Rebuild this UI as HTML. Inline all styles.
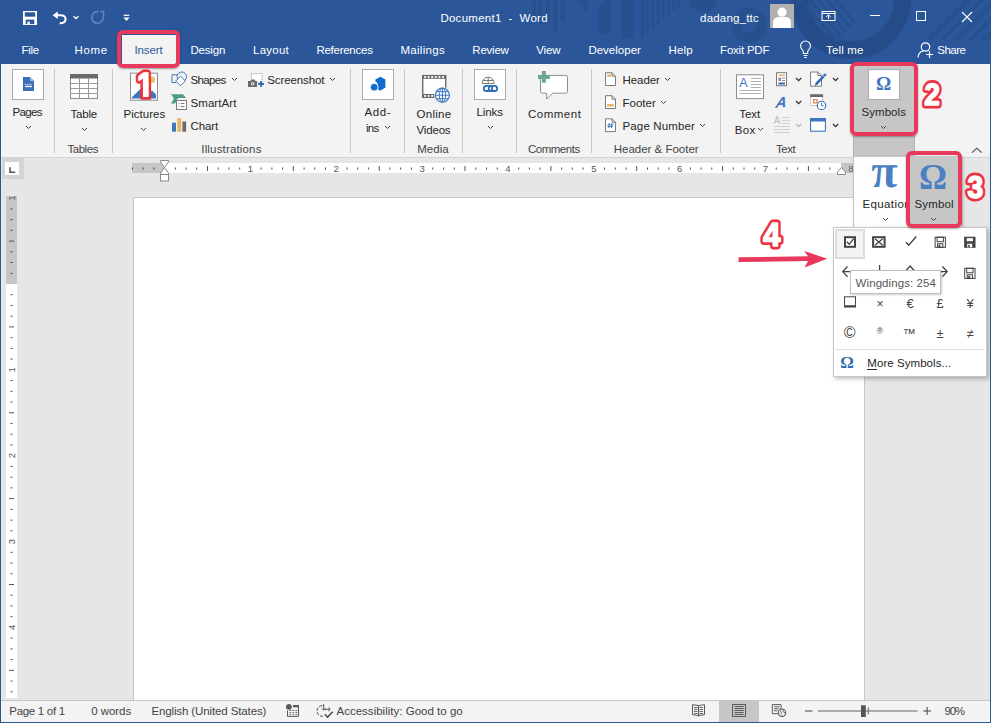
<!DOCTYPE html>
<html><head><meta charset="utf-8"><title>Document1 - Word</title>
<style>
html,body{margin:0;padding:0}
body{width:991px;height:723px;overflow:hidden;position:relative;background:#e6e6e6;font-family:"Liberation Sans",sans-serif;}
.t{position:absolute;white-space:pre;line-height:16px;font-family:"Liberation Sans",sans-serif;}
.a{position:absolute}
svg{position:absolute;overflow:visible}

.tb{position:absolute;left:0;top:0;width:991px;height:64px;background:#2b579a}
.rb{position:absolute;left:0;top:64px;width:991px;height:93px;background:#f3f3f3;border-bottom:1px solid #d4d4d4}
.sep{position:absolute;width:1px;background:#c8c8c8;top:69px;height:84px}
.ibox{position:absolute;background:#fff;border:1px solid #ababab;box-sizing:border-box}
.red{position:absolute;border:4px solid #e8395d;border-radius:6px;box-sizing:border-box;box-shadow:0 1px 2px rgba(0,0,0,.35)}

</style></head><body>
<div class="tb"></div>
<svg style="left:0;top:0" width="991" height="64" viewBox="0 0 991 64"><defs><clipPath id="tbc"><rect x="0" y="0" width="991" height="64"/></clipPath></defs><g clip-path="url(#tbc)" fill="#27508f"><rect x="532" y="0" width="3.8" height="20"/><rect x="538.5" y="0" width="3.8" height="24"/><rect x="546" y="0" width="3.8" height="22"/><rect x="553" y="0" width="4.5" height="33"/><rect x="560.5" y="0" width="4.5" height="20"/><path d="M578 0 H588 V14 Z"/><path d="M598 8 L604 0 H611 V34 H598 Z"/><rect x="621" y="0" width="13" height="38"/><rect x="641.0" y="0" width="3" height="38.0"/><rect x="646.2" y="0" width="3" height="33.4"/><rect x="651.4" y="0" width="3" height="28.8"/><rect x="656.6" y="0" width="3" height="24.2"/><rect x="661.8" y="0" width="3" height="19.6"/><rect x="667.0" y="0" width="3" height="15.0"/><rect x="672.2" y="0" width="3" height="10.4"/><rect x="677.4" y="0" width="3" height="5.8"/><path d="M689 0 A14 12 0 0 0 717 0 Z"/><circle cx="749.4" cy="25.2" r="12.4" fill="none" stroke="#27508f" stroke-width="10.6"/><circle cx="851" cy="-1.5" r="51.5" fill="none" stroke="#254c88" stroke-width="17"/><path d="M798 0 L802.5 0 L840 42 L835.5 42 Z"/><path d="M807 0 L811.5 0 L844 37 L839.5 37 Z"/><path d="M816 0 L820.5 0 L848 32 L843.5 32 Z"/><path d="M825 0 L829.5 0 L852 27 L847.5 27 Z"/><path d="M834 0 L838.5 0 L856 22 L851.5 22 Z"/><path d="M965 0 L971 0 L931 40 L925 40 Z"/><path d="M979 0 L985 0 L945 40 L939 40 Z"/><path d="M993 0 L999 0 L959 40 L953 40 Z"/><path d="M1007 0 L1013 0 L973 40 L967 40 Z"/><path d="M1021 0 L1027 0 L987 40 L981 40 Z"/></g></svg>
<span class="t" style="left:440.4px;top:10px;font-size:11.5px;letter-spacing:0.265px;color:#fff;">Document1  -  Word</span>
<span class="t" style="left:700.1px;top:10px;font-size:11.5px;letter-spacing:0.187px;color:#fff;">dadang_ttc</span>
<span class="t" style="left:21.4px;top:42px;font-size:11.5px;letter-spacing:-0.277px;color:#fff;">File</span>
<span class="t" style="left:74.4px;top:42px;font-size:11.5px;letter-spacing:0.707px;color:#fff;">Home</span>
<span class="t" style="left:190.5px;top:42px;font-size:11.5px;letter-spacing:-0.200px;color:#fff;">Design</span>
<span class="t" style="left:253.1px;top:42px;font-size:11.5px;letter-spacing:0.214px;color:#fff;">Layout</span>
<span class="t" style="left:316.4px;top:42px;font-size:11.5px;letter-spacing:-0.257px;color:#fff;">References</span>
<span class="t" style="left:400.4px;top:42px;font-size:11.5px;letter-spacing:0.317px;color:#fff;">Mailings</span>
<span class="t" style="left:472.3px;top:42px;font-size:11.5px;letter-spacing:-0.221px;color:#fff;">Review</span>
<span class="t" style="left:536.2px;top:42px;font-size:11.5px;letter-spacing:-0.106px;color:#fff;">View</span>
<span class="t" style="left:588.4px;top:42px;font-size:11.5px;letter-spacing:0.010px;color:#fff;">Developer</span>
<span class="t" style="left:668.4px;top:42px;font-size:11.5px;letter-spacing:0.183px;color:#fff;">Help</span>
<span class="t" style="left:720.1px;top:42px;font-size:11.5px;letter-spacing:-0.215px;color:#fff;">Foxit PDF</span>
<span class="t" style="left:826.0px;top:42px;font-size:11.5px;letter-spacing:0.162px;color:#fff;">Tell me</span>
<span class="t" style="left:937.3px;top:42px;font-size:11.5px;letter-spacing:-0.497px;color:#fff;">Share</span>
<div class="a" style="left:122px;top:35px;width:54px;height:29px;background:#f3f3f3"></div>
<span class="t" style="left:134.5px;top:42px;font-size:11.5px;letter-spacing:-0.113px;color:#2b579a;">Insert</span>
<div class="rb"></div>
<div class="sep" style="left:54px"></div>
<div class="sep" style="left:112px"></div>
<div class="sep" style="left:350px"></div>
<div class="sep" style="left:404px"></div>
<div class="sep" style="left:462px"></div>
<div class="sep" style="left:516px"></div>
<div class="sep" style="left:591px"></div>
<div class="sep" style="left:720px"></div>
<div class="a" style="left:853px;top:64px;width:62px;height:92px;background:#c6c6c6;border-left:1px solid #b4b4b4;border-right:1px solid #b4b4b4;box-sizing:border-box"></div>
<span class="t" style="left:12.6px;top:104px;font-size:11.5px;letter-spacing:-0.702px;color:#262626;">Pages</span>
<span class="t" style="left:70.6px;top:106px;font-size:11.5px;letter-spacing:-0.249px;color:#262626;">Table</span>
<span class="t" style="left:123.6px;top:106px;font-size:11.5px;letter-spacing:0.008px;color:#262626;">Pictures</span>
<span class="t" style="left:364.4px;top:104px;font-size:11.5px;letter-spacing:0.636px;color:#262626;">Add-</span>
<span class="t" style="left:365.9px;top:120px;font-size:11.5px;letter-spacing:-0.651px;color:#262626;">ins</span>
<span class="t" style="left:416.6px;top:106px;font-size:11.5px;letter-spacing:0.251px;color:#262626;">Online</span>
<span class="t" style="left:416.6px;top:122px;font-size:11.5px;letter-spacing:-0.191px;color:#262626;">Videos</span>
<span class="t" style="left:476.5px;top:104px;font-size:11.5px;letter-spacing:-0.112px;color:#262626;">Links</span>
<span class="t" style="left:527.9px;top:106px;font-size:11.5px;letter-spacing:0.525px;color:#262626;">Comment</span>
<span class="t" style="left:739.3px;top:106px;font-size:11.5px;letter-spacing:-0.097px;color:#262626;">Text</span>
<span class="t" style="left:734.7px;top:122px;font-size:11.5px;letter-spacing:0.342px;color:#262626;">Box</span>
<span class="t" style="left:861.4px;top:104px;font-size:11.5px;letter-spacing:0.084px;color:#262626;">Symbols</span>
<span class="t" style="left:190.5px;top:72px;font-size:11.5px;letter-spacing:-0.641px;color:#262626;">Shapes</span>
<span class="t" style="left:190.5px;top:95px;font-size:11.5px;letter-spacing:0.076px;color:#262626;">SmartArt</span>
<span class="t" style="left:190.5px;top:118px;font-size:11.5px;letter-spacing:-0.106px;color:#262626;">Chart</span>
<span class="t" style="left:267.2px;top:72px;font-size:11.5px;letter-spacing:-0.098px;color:#262626;">Screenshot</span>
<span class="t" style="left:622.5px;top:72px;font-size:11.5px;letter-spacing:-0.064px;color:#262626;">Header</span>
<span class="t" style="left:622.5px;top:95px;font-size:11.5px;letter-spacing:0.012px;color:#262626;">Footer</span>
<span class="t" style="left:622.5px;top:118px;font-size:11.5px;letter-spacing:0.144px;color:#262626;">Page Number</span>
<span class="t" style="left:67.4px;top:141px;font-size:11.5px;letter-spacing:-0.449px;color:#444;">Tables</span>
<span class="t" style="left:201.3px;top:141px;font-size:11.5px;letter-spacing:0.161px;color:#444;">Illustrations</span>
<span class="t" style="left:417.3px;top:141px;font-size:11.5px;letter-spacing:-0.006px;color:#444;">Media</span>
<span class="t" style="left:527.9px;top:141px;font-size:11.5px;letter-spacing:-0.471px;color:#444;">Comments</span>
<span class="t" style="left:613.7px;top:141px;font-size:11.5px;letter-spacing:-0.002px;color:#444;">Header &amp; Footer</span>
<span class="t" style="left:776.0px;top:141px;font-size:11.5px;letter-spacing:-0.464px;color:#444;">Text</span>
<svg style="left:26px;top:126px" width="5" height="3.5"><path d="M0 0 L2.5 2.5 L5 0" fill="none" stroke="#444" stroke-width="1"/></svg>
<svg style="left:81.5px;top:128px" width="5" height="3.5"><path d="M0 0 L2.5 2.5 L5 0" fill="none" stroke="#444" stroke-width="1"/></svg>
<svg style="left:141.3px;top:128px" width="5" height="3.5"><path d="M0 0 L2.5 2.5 L5 0" fill="none" stroke="#444" stroke-width="1"/></svg>
<svg style="left:231.6px;top:78px" width="5" height="3.5"><path d="M0 0 L2.5 2.5 L5 0" fill="none" stroke="#444" stroke-width="1"/></svg>
<svg style="left:329.6px;top:78px" width="5" height="3.5"><path d="M0 0 L2.5 2.5 L5 0" fill="none" stroke="#444" stroke-width="1"/></svg>
<svg style="left:384.5px;top:126px" width="5" height="3.5"><path d="M0 0 L2.5 2.5 L5 0" fill="none" stroke="#444" stroke-width="1"/></svg>
<svg style="left:487.6px;top:126px" width="5" height="3.5"><path d="M0 0 L2.5 2.5 L5 0" fill="none" stroke="#444" stroke-width="1"/></svg>
<svg style="left:664.9px;top:78px" width="5" height="3.5"><path d="M0 0 L2.5 2.5 L5 0" fill="none" stroke="#444" stroke-width="1"/></svg>
<svg style="left:660.6px;top:101px" width="5" height="3.5"><path d="M0 0 L2.5 2.5 L5 0" fill="none" stroke="#444" stroke-width="1"/></svg>
<svg style="left:700px;top:124px" width="5" height="3.5"><path d="M0 0 L2.5 2.5 L5 0" fill="none" stroke="#444" stroke-width="1"/></svg>
<svg style="left:758.3px;top:128px" width="5" height="3.5"><path d="M0 0 L2.5 2.5 L5 0" fill="none" stroke="#444" stroke-width="1"/></svg>
<svg style="left:881.3px;top:126px" width="5" height="3.5"><path d="M0 0 L2.5 2.5 L5 0" fill="none" stroke="#444" stroke-width="1"/></svg>
<svg style="left:795.5px;top:78px" width="5.2" height="3.6"><path d="M0 0 L2.6 2.6 L5.2 0" fill="none" stroke="#333" stroke-width="1.3"/></svg>
<svg style="left:795.5px;top:101px" width="5.2" height="3.6"><path d="M0 0 L2.6 2.6 L5.2 0" fill="none" stroke="#333" stroke-width="1.3"/></svg>
<svg style="left:833.4px;top:78px" width="5.2" height="3.6"><path d="M0 0 L2.6 2.6 L5.2 0" fill="none" stroke="#333" stroke-width="1.3"/></svg>
<svg style="left:833.4px;top:124px" width="5.2" height="3.6"><path d="M0 0 L2.6 2.6 L5.2 0" fill="none" stroke="#333" stroke-width="1.3"/></svg>
<svg style="left:795.5px;top:124px" width="5.2" height="3.6"><path d="M0 0 L2.6 2.6 L5.2 0" fill="none" stroke="#b8b8b8" stroke-width="1.3"/></svg>
<div class="ibox" style="left:12px;top:69px;width:32px;height:31px"></div>
<div class="ibox" style="left:362px;top:69px;width:32px;height:31px"></div>
<div class="ibox" style="left:474px;top:69px;width:32px;height:31px"></div>
<div class="ibox" style="left:868px;top:69px;width:32px;height:31px"></div>
<svg style="left:0;top:0" width="991" height="64"><rect x="23" y="11" width="14" height="14" fill="#fff"/><rect x="24.800" y="12.300" width="10.400" height="4.400" fill="#2b579a"/><rect x="25.700" y="19.600" width="8.600" height="4.500" fill="#2b579a"/><rect x="27.500" y="21.600" width="2.300" height="2.500" fill="#fff"/><path d="M57.800 11.500 L52.600 15.200 L57.800 19 Z" fill="#fff"/><path d="M56 15.200 H60.500 C67 15.200 67.500 22.500 60.500 23.300" fill="none" stroke="#fff" stroke-width="2" stroke-linecap="round"/><path d="M73.500 16.200 L76 18.500 L78.500 16.200" fill="none" stroke="#fff" stroke-width="1.300"/><path d="M98.500 11.700 A5.800 5.800 0 1 0 103.200 16.300" fill="none" stroke="#6584ba" stroke-width="1.600"/><path d="M100 11.600 H103.500 V16.600" fill="none" stroke="#6584ba" stroke-width="1.500"/><rect x="123.7" y="14.7" width="5.6" height="1.2" fill="#fff"/><path d="M123.4 17.6 H129.6 L126.5 21 Z" fill="#fff"/><rect x="770" y="4" width="24" height="24" fill="#b1b1b1"/><circle cx="782" cy="12.2" r="4.6" fill="#fff"/><path d="M773 28 V22.5 Q773 17.5 778.5 17 H785.5 Q791 17.5 791 22.5 V28 Z" fill="#fff"/><rect x="822" y="11.5" width="13" height="9" fill="none" stroke="#fff" stroke-width="1"/><path d="M822 13.5 H835" stroke="#fff" stroke-width="1"/><path d="M828.5 19 V15 M826.3 17 L828.5 14.8 L830.7 17" fill="none" stroke="#fff" stroke-width="1"/><rect x="870" y="15" width="10" height="1" fill="#fff"/><rect x="916.5" y="11.5" width="9" height="9" fill="none" stroke="#fff" stroke-width="1"/><path d="M962 12 L972 22 M972 12 L962 22" stroke="#fff" stroke-width="1.1" fill="none"/><path d="M803.3 53.5 V52 Q803.3 50.5 802 49.3 A4.9 4.9 0 1 1 809 49.3 Q807.7 50.5 807.7 52 V53.5 Z M803.6 55.5 H807.4 M804.3 57.5 H806.7" fill="none" stroke="#fff" stroke-width="1.1"/><circle cx="925.5" cy="47" r="4.2" fill="none" stroke="#fff" stroke-width="1.2"/><path d="M918 57.5 Q918.5 52 923 51" fill="none" stroke="#fff" stroke-width="1.2"/><path d="M926 54.5 H933 M929.5 51 V58" stroke="#fff" stroke-width="1.2"/></svg>
<svg style="left:0;top:0" width="991" height="160"><path d="M23 77 H30 L34 81 V91 H23 Z" fill="#3f6fb8"/><path d="M30 77 V81 H34 Z" fill="#9db8dd"/><path d="M25 84.5 H32" stroke="#fff" stroke-width="1" stroke-dasharray="1 0.8"/><path d="M25 86.5 H32" stroke="#fff" stroke-width="1.2"/><rect x="70.5" y="74.5" width="27" height="24" fill="#fff" stroke="#8c8c8c"/><rect x="70" y="74" width="28" height="4.5" fill="#6a6a6a"/><path d="M79.5 78 V98.5" stroke="#9a9a9a"/><path d="M88.5 78 V98.5" stroke="#9a9a9a"/><path d="M70.5 83.5 H97.5" stroke="#9a9a9a"/><path d="M70.5 88.5 H97.5" stroke="#9a9a9a"/><path d="M70.5 93.5 H97.5" stroke="#9a9a9a"/><rect x="130.5" y="73.200" width="27" height="27" fill="#fff" stroke="#8c8c8c"/><circle cx="152" cy="79.7" r="3.2" fill="#f0c465"/><path d="M132 98.500 V97 L143 86.500 L149.500 92.500 L152 90.500 L156 94.500 V98.500 Z" fill="#3e76bf"/><circle cx="181.800" cy="76.700" r="4.700" fill="none" stroke="#3e76bf"/><path d="M177.500 74.800 H172 V82.500 H176" fill="none" stroke="#3e76bf"/><path d="M180.500 76.200 L185.300 81 L180.500 85.800 L175.700 81 Z" fill="#fff" stroke="#3e76bf"/><path d="M171 94.300 H183 L186 98 H178.500 L176.500 100 V102 L174.500 103.500 H171 L174 98.500 Z" fill="#4f9c85"/><rect x="176.500" y="100.500" width="10" height="9" fill="#fff" stroke="#7a7a7a"/><path d="M178.500 103.500 H179.500 M181 103.500 H184.500 M178.500 106.500 H179.500 M181 106.500 H184.500" stroke="#7a7a7a"/><rect x="172" y="122.700" width="4" height="9" fill="#3e76bf"/><rect x="177.200" y="118.100" width="4" height="13.600" fill="#e8b766"/><rect x="182.400" y="121.500" width="3.700" height="10.200" fill="#6a6a6a"/><rect x="251.500" y="73.500" width="10.500" height="9" fill="#fff" stroke="#9a9a9a" stroke-dasharray="1 1"/><path d="M248 81 H250.500 L251.500 79.500 H254.500 L255.500 81 H257 V87 H248 Z" fill="#6a6a6a"/><circle cx="252.700" cy="83.800" r="1.700" fill="#f3f3f3"/><circle cx="252.700" cy="83.800" r="0.800" fill="#6a6a6a"/><path d="M258.200 84 H264 M261.100 81 V86.900" stroke="#2f6db5" stroke-width="1.800"/><path d="M380.400 76.700 L385.400 79.600 V87.600 L380.400 90.700 L377.500 89 V83 L375.400 81.500 V79.600 Z" fill="#0f6cd0"/><circle cx="374.200" cy="87.200" r="3.900" fill="#0f6cd0" stroke="#fff" stroke-width="0.900"/><rect x="422.700" y="75.600" width="23" height="21.600" fill="#fff" stroke="#6a6a6a" stroke-width="1.400"/><rect x="422" y="75" width="24" height="3.800" fill="#6a6a6a"/><rect x="422" y="94" width="24" height="3.800" fill="#6a6a6a"/><rect x="424.0" y="76.100" width="2" height="1.700" fill="#fff"/><rect x="424.0" y="95.100" width="2" height="1.700" fill="#fff"/><rect x="427.6" y="76.100" width="2" height="1.700" fill="#fff"/><rect x="427.6" y="95.100" width="2" height="1.700" fill="#fff"/><rect x="431.2" y="76.100" width="2" height="1.700" fill="#fff"/><rect x="431.2" y="95.100" width="2" height="1.700" fill="#fff"/><rect x="434.8" y="76.100" width="2" height="1.700" fill="#fff"/><rect x="438.4" y="76.100" width="2" height="1.700" fill="#fff"/><rect x="442.0" y="76.100" width="2" height="1.700" fill="#fff"/><circle cx="442.400" cy="95.200" r="8.300" fill="#f3f3f3"/><circle cx="442.400" cy="95.200" r="7" fill="#fff" stroke="#3e76bf" stroke-width="1.200"/><ellipse cx="442.400" cy="95.200" rx="3.200" ry="7" fill="none" stroke="#3e76bf" stroke-width="1"/><path d="M442.400 88.200 V102.200 M435.400 95.200 H449.400 M436.500 91.700 H448.300 M436.500 98.700 H448.300" stroke="#3e76bf" stroke-width="1" fill="none"/><path d="M482.200 83.500 A6 6.300 0 0 1 494.200 83.500 Z" fill="#fff" stroke="#7a7a7a" stroke-width="1"/><path d="M488.200 77.200 V83.500 M483 80.500 H493.400" stroke="#7a7a7a" stroke-width="1" fill="none"/><ellipse cx="488.200" cy="83.500" rx="2.800" ry="6.300" fill="none" stroke="#7a7a7a" stroke-width="0.001"/><rect x="483.800" y="85.800" width="8.500" height="5.200" rx="2.600" fill="none" stroke="#2f6db5" stroke-width="1.800"/><rect x="488.700" y="85.800" width="8.500" height="5.200" rx="2.600" fill="none" stroke="#2f6db5" stroke-width="1.800"/><path d="M542.500 75.400 H565.500 Q567.500 75.400 567.500 77.400 V91.200 Q567.500 93.200 565.500 93.200 H552.500 L546.700 99 V93.200 H542.500 Q540.500 93.200 540.500 91.200 V77.400 Q540.500 75.400 542.500 75.400 Z" fill="#fff" stroke="#8c8c8c" stroke-width="1"/><path d="M538 76.900 H549.800 M543.900 71 V82.800" stroke="#6aa78f" stroke-width="4" fill="none"/><path d="M605.500 72.7 H612 L615.500 76.2 V85.5 H605.500 Z" fill="#fff" stroke="#7a7a7a"/><path d="M612 72.7 V76.2 H615.500" fill="none" stroke="#7a7a7a"/><path d="M605.500 95.7 H612 L615.500 99.2 V108.5 H605.500 Z" fill="#fff" stroke="#7a7a7a"/><path d="M612 95.7 V99.2 H615.500" fill="none" stroke="#7a7a7a"/><path d="M605.500 118.8 H612 L615.500 122.3 V131.6 H605.500 Z" fill="#fff" stroke="#7a7a7a"/><path d="M612 118.8 V122.3 H615.500" fill="none" stroke="#7a7a7a"/><rect x="607.100" y="74.300" width="4" height="2.500" fill="#e8b766"/><rect x="607.100" y="104" width="6.700" height="2.600" fill="#e8b766"/><path d="M609.300 123 L608.700 128 M612 123 L611.400 128 M607.500 124.700 H613.300 M607.300 126.500 H613" stroke="#3e76bf" stroke-width="0.900" fill="none"/><rect x="736.500" y="74.800" width="27" height="23.800" fill="#fff" stroke="#8c8c8c"/><path d="M751 78.500 H761 M751 81.500 H761 M751 84.500 H761 M751 87.500 H761 M739.500 90.500 H761 M739.500 93.500 H761" stroke="#b0b0b0" stroke-width="1"/><text x="739.300" y="87" font-size="12.500" fill="#3e76bf" font-family="Liberation Sans, sans-serif">A</text><rect x="776.500" y="72.700" width="10" height="13" fill="#fff" stroke="#7a7a7a"/><rect x="778.500" y="74.500" width="6.500" height="1.500" fill="#e8b766"/><rect x="778.500" y="77.500" width="2.500" height="3.500" fill="#8c8c8c"/><path d="M782 78 H785 M782 80.500 H785" stroke="#8c8c8c" stroke-width="1"/><rect x="778.500" y="82.500" width="6.500" height="2" fill="#2f6db5"/><text x="776" y="107.500" font-size="15" font-weight="bold" font-style="italic" fill="#3e76bf" font-family="Liberation Sans, sans-serif" transform="translate(781 102) skewX(-14) rotate(-6) translate(-781 -102)">A</text><text x="773.800" y="124" font-size="10" fill="#bdbdbd" font-family="Liberation Sans, sans-serif">A</text><path d="M782 117.500 H790 M782 120.500 H790 M782 123.500 H790 M774 126.500 H790 M774 129.500 H790 M774 132.500 H790" stroke="#cfcfcf" stroke-width="1"/><path d="M810.600 72 H818 L821.500 75.500 V86.200 H810.600 Z" fill="#fff" stroke="#7a7a7a"/><path d="M818 72 V75.500 H821.500" fill="none" stroke="#7a7a7a"/><path d="M825 74.800 L816.500 83.700" stroke="#2f6db5" stroke-width="2.600" stroke-linecap="round"/><path d="M816.800 82.600 L814.300 86.300 L818.200 84.200 Z" fill="#2f6db5"/><path d="M823.300 75.600 L824.700 77" stroke="#fff" stroke-width="0.800"/><rect x="810.600" y="94.800" width="12" height="10.700" fill="#fff" stroke="#9a9a9a" stroke-dasharray="1 1"/><rect x="810.100" y="94.300" width="13" height="2.700" fill="#6a6a6a"/><rect x="813.700" y="99.600" width="3.300" height="3.300" fill="#fff" stroke="#e07b39" stroke-width="1.100"/><circle cx="821.500" cy="105.500" r="4.200" fill="#fff" stroke="#2f6db5" stroke-width="1.100"/><path d="M821.500 103 V105.700 H823.700" fill="none" stroke="#2f6db5" stroke-width="0.900"/><rect x="810.600" y="118.600" width="14.800" height="12.600" fill="#fff" stroke="#3e76bf" stroke-width="1.100"/><rect x="810.100" y="118.100" width="15.800" height="3.400" fill="#3e76bf"/><path d="M972 152.600 L976.800 148.200 L981.600 152.600" fill="none" stroke="#444" stroke-width="1.100"/></svg>
<span class="t" style="left:876px;top:74px;font-family:'Liberation Serif',serif;font-weight:bold;font-size:19px;line-height:20px;color:#3e76bf">Ω</span>
<div class="a" style="left:134px;top:198px;width:729.5px;height:502px;background:#fff;box-shadow:0 0 0 1px #c8c8c8"></div>
<div class="a" style="left:1px;top:700px;width:989px;height:21px;background:#f3f3f3;border-top:1px solid #c6c6c6"></div>
<div class="a" style="left:719px;top:701px;width:40px;height:21px;background:#c6c6c6"></div>
<span class="t" style="left:9.3px;top:703px;font-size:11.5px;letter-spacing:-0.303px;color:#444;">Page 1 of 1</span>
<span class="t" style="left:91.3px;top:703px;font-size:11.5px;letter-spacing:-0.062px;color:#444;">0 words</span>
<span class="t" style="left:151.4px;top:703px;font-size:11.5px;letter-spacing:-0.119px;color:#444;">English (United States)</span>
<span class="t" style="left:336.5px;top:703px;font-size:11.5px;letter-spacing:0.011px;color:#444;">Accessibility: Good to go</span>
<span class="t" style="left:944.5px;top:703px;font-size:11.5px;letter-spacing:-1.259px;color:#444;">90%</span>
<div class="a" style="left:2px;top:158px;width:22px;height:21px;background:#d4d4d4"></div>
<div class="a" style="left:5px;top:162px;width:14px;height:13px;background:#fff"></div>
<svg style="left:9px;top:166px" width="7" height="7"><path d="M1 1.300 V6.200 H6.200" fill="none" stroke="#555" stroke-width="1.600"/></svg>
<div class="a" style="left:132px;top:163px;width:721px;height:10px;background:#fff"></div>
<div class="a" style="left:132px;top:163px;width:32px;height:10px;background:#c6c6c6"></div>
<div class="a" style="left:841px;top:163px;width:12px;height:10px;background:#c6c6c6"></div>
<svg style="left:0;top:0" width="991" height="200"><rect x="131.9" y="167.500" width="1" height="2" fill="#4a4a4a"/><rect x="142.6" y="167.500" width="1" height="2" fill="#4a4a4a"/><rect x="153.3" y="167.500" width="1" height="2" fill="#4a4a4a"/><rect x="174.8" y="167.500" width="1" height="2" fill="#4a4a4a"/><rect x="185.5" y="167.500" width="1" height="2" fill="#4a4a4a"/><rect x="196.2" y="167.500" width="1" height="2" fill="#4a4a4a"/><rect x="207.0" y="166" width="1" height="5" fill="#555"/><rect x="217.7" y="167.500" width="1" height="2" fill="#4a4a4a"/><rect x="228.4" y="167.500" width="1" height="2" fill="#4a4a4a"/><rect x="239.2" y="167.500" width="1" height="2" fill="#4a4a4a"/><rect x="260.6" y="167.500" width="1" height="2" fill="#4a4a4a"/><rect x="271.4" y="167.500" width="1" height="2" fill="#4a4a4a"/><rect x="282.1" y="167.500" width="1" height="2" fill="#4a4a4a"/><rect x="292.8" y="166" width="1" height="5" fill="#555"/><rect x="303.6" y="167.500" width="1" height="2" fill="#4a4a4a"/><rect x="314.3" y="167.500" width="1" height="2" fill="#4a4a4a"/><rect x="325.0" y="167.500" width="1" height="2" fill="#4a4a4a"/><rect x="346.5" y="167.500" width="1" height="2" fill="#4a4a4a"/><rect x="357.2" y="167.500" width="1" height="2" fill="#4a4a4a"/><rect x="367.9" y="167.500" width="1" height="2" fill="#4a4a4a"/><rect x="378.7" y="166" width="1" height="5" fill="#555"/><rect x="389.4" y="167.500" width="1" height="2" fill="#4a4a4a"/><rect x="400.1" y="167.500" width="1" height="2" fill="#4a4a4a"/><rect x="410.9" y="167.500" width="1" height="2" fill="#4a4a4a"/><rect x="432.3" y="167.500" width="1" height="2" fill="#4a4a4a"/><rect x="443.1" y="167.500" width="1" height="2" fill="#4a4a4a"/><rect x="453.8" y="167.500" width="1" height="2" fill="#4a4a4a"/><rect x="464.5" y="166" width="1" height="5" fill="#555"/><rect x="475.3" y="167.500" width="1" height="2" fill="#4a4a4a"/><rect x="486.0" y="167.500" width="1" height="2" fill="#4a4a4a"/><rect x="496.7" y="167.500" width="1" height="2" fill="#4a4a4a"/><rect x="518.2" y="167.500" width="1" height="2" fill="#4a4a4a"/><rect x="528.9" y="167.500" width="1" height="2" fill="#4a4a4a"/><rect x="539.6" y="167.500" width="1" height="2" fill="#4a4a4a"/><rect x="550.4" y="166" width="1" height="5" fill="#555"/><rect x="561.1" y="167.500" width="1" height="2" fill="#4a4a4a"/><rect x="571.8" y="167.500" width="1" height="2" fill="#4a4a4a"/><rect x="582.6" y="167.500" width="1" height="2" fill="#4a4a4a"/><rect x="604.0" y="167.500" width="1" height="2" fill="#4a4a4a"/><rect x="614.8" y="167.500" width="1" height="2" fill="#4a4a4a"/><rect x="625.5" y="167.500" width="1" height="2" fill="#4a4a4a"/><rect x="636.2" y="166" width="1" height="5" fill="#555"/><rect x="647.0" y="167.500" width="1" height="2" fill="#4a4a4a"/><rect x="657.7" y="167.500" width="1" height="2" fill="#4a4a4a"/><rect x="668.4" y="167.500" width="1" height="2" fill="#4a4a4a"/><rect x="689.9" y="167.500" width="1" height="2" fill="#4a4a4a"/><rect x="700.6" y="167.500" width="1" height="2" fill="#4a4a4a"/><rect x="711.3" y="167.500" width="1" height="2" fill="#4a4a4a"/><rect x="722.1" y="166" width="1" height="5" fill="#555"/><rect x="732.8" y="167.500" width="1" height="2" fill="#4a4a4a"/><rect x="743.5" y="167.500" width="1" height="2" fill="#4a4a4a"/><rect x="754.3" y="167.500" width="1" height="2" fill="#4a4a4a"/><rect x="775.7" y="167.500" width="1" height="2" fill="#4a4a4a"/><rect x="786.5" y="167.500" width="1" height="2" fill="#4a4a4a"/><rect x="797.2" y="167.500" width="1" height="2" fill="#4a4a4a"/><rect x="807.9" y="166" width="1" height="5" fill="#555"/><rect x="818.7" y="167.500" width="1" height="2" fill="#4a4a4a"/><rect x="829.4" y="167.500" width="1" height="2" fill="#4a4a4a"/><text x="250.4" y="172" font-size="9.500" fill="#555" text-anchor="middle" font-family="Liberation Sans, sans-serif">1</text><text x="336.2" y="172" font-size="9.500" fill="#555" text-anchor="middle" font-family="Liberation Sans, sans-serif">2</text><text x="422.1" y="172" font-size="9.500" fill="#555" text-anchor="middle" font-family="Liberation Sans, sans-serif">3</text><text x="507.9" y="172" font-size="9.500" fill="#555" text-anchor="middle" font-family="Liberation Sans, sans-serif">4</text><text x="593.8" y="172" font-size="9.500" fill="#555" text-anchor="middle" font-family="Liberation Sans, sans-serif">5</text><text x="679.6" y="172" font-size="9.500" fill="#555" text-anchor="middle" font-family="Liberation Sans, sans-serif">6</text><text x="765.5" y="172" font-size="9.500" fill="#555" text-anchor="middle" font-family="Liberation Sans, sans-serif">7</text><text x="851" y="172" font-size="9.500" fill="#666" text-anchor="middle" font-family="Liberation Sans, sans-serif">8</text><path d="M160.5 160.5 H168.5 V162 L164.5 167.5 L168.5 173 V174.5 H160.5 V173 L164.5 167.5 L160.5 162 Z" fill="#fff" stroke="#8a8a8a" stroke-width="1"/><rect x="160.5" y="174.5" width="8" height="6.5" fill="#fff" stroke="#8a8a8a" stroke-width="1"/><path d="M841.5 167.5 L845.5 172 V174.5 H837.5 V172 Z" fill="#fff" stroke="#8a8a8a" stroke-width="1"/></svg>
<div class="a" style="left:6px;top:196px;width:11px;height:502px;background:#fff"></div>
<div class="a" style="left:6px;top:196px;width:11px;height:88px;background:#c6c6c6"></div>
<svg style="left:0;top:0" width="30" height="723"><rect x="10.500" y="208.4" width="2" height="1" fill="#4a4a4a"/><rect x="10.500" y="219.1" width="2" height="1" fill="#4a4a4a"/><rect x="10.500" y="229.8" width="2" height="1" fill="#4a4a4a"/><rect x="9" y="240.6" width="5" height="1" fill="#555"/><rect x="10.500" y="251.3" width="2" height="1" fill="#4a4a4a"/><rect x="10.500" y="262.0" width="2" height="1" fill="#4a4a4a"/><rect x="10.500" y="272.8" width="2" height="1" fill="#4a4a4a"/><rect x="10.500" y="294.2" width="2" height="1" fill="#4a4a4a"/><rect x="10.500" y="305.0" width="2" height="1" fill="#4a4a4a"/><rect x="10.500" y="315.7" width="2" height="1" fill="#4a4a4a"/><rect x="9" y="326.4" width="5" height="1" fill="#555"/><rect x="10.500" y="337.2" width="2" height="1" fill="#4a4a4a"/><rect x="10.500" y="347.9" width="2" height="1" fill="#4a4a4a"/><rect x="10.500" y="358.6" width="2" height="1" fill="#4a4a4a"/><rect x="10.500" y="380.1" width="2" height="1" fill="#4a4a4a"/><rect x="10.500" y="390.8" width="2" height="1" fill="#4a4a4a"/><rect x="10.500" y="401.5" width="2" height="1" fill="#4a4a4a"/><rect x="9" y="412.3" width="5" height="1" fill="#555"/><rect x="10.500" y="423.0" width="2" height="1" fill="#4a4a4a"/><rect x="10.500" y="433.7" width="2" height="1" fill="#4a4a4a"/><rect x="10.500" y="444.5" width="2" height="1" fill="#4a4a4a"/><rect x="10.500" y="465.9" width="2" height="1" fill="#4a4a4a"/><rect x="10.500" y="476.7" width="2" height="1" fill="#4a4a4a"/><rect x="10.500" y="487.4" width="2" height="1" fill="#4a4a4a"/><rect x="9" y="498.1" width="5" height="1" fill="#555"/><rect x="10.500" y="508.9" width="2" height="1" fill="#4a4a4a"/><rect x="10.500" y="519.6" width="2" height="1" fill="#4a4a4a"/><rect x="10.500" y="530.3" width="2" height="1" fill="#4a4a4a"/><rect x="10.500" y="551.8" width="2" height="1" fill="#4a4a4a"/><rect x="10.500" y="562.5" width="2" height="1" fill="#4a4a4a"/><rect x="10.500" y="573.2" width="2" height="1" fill="#4a4a4a"/><rect x="9" y="584.0" width="5" height="1" fill="#555"/><rect x="10.500" y="594.7" width="2" height="1" fill="#4a4a4a"/><rect x="10.500" y="605.4" width="2" height="1" fill="#4a4a4a"/><rect x="10.500" y="616.2" width="2" height="1" fill="#4a4a4a"/><rect x="10.500" y="637.6" width="2" height="1" fill="#4a4a4a"/><rect x="10.500" y="648.4" width="2" height="1" fill="#4a4a4a"/><rect x="10.500" y="659.1" width="2" height="1" fill="#4a4a4a"/><rect x="9" y="669.8" width="5" height="1" fill="#555"/><rect x="10.500" y="680.6" width="2" height="1" fill="#4a4a4a"/><rect x="10.500" y="691.3" width="2" height="1" fill="#4a4a4a"/><text transform="translate(15,198.2) rotate(-90)" font-size="9.500" fill="#555" text-anchor="middle" font-family="Liberation Sans, sans-serif">1</text><text transform="translate(15,369.9) rotate(-90)" font-size="9.500" fill="#555" text-anchor="middle" font-family="Liberation Sans, sans-serif">1</text><text transform="translate(15,455.7) rotate(-90)" font-size="9.500" fill="#555" text-anchor="middle" font-family="Liberation Sans, sans-serif">2</text><text transform="translate(15,541.5) rotate(-90)" font-size="9.500" fill="#555" text-anchor="middle" font-family="Liberation Sans, sans-serif">3</text><text transform="translate(15,627.4) rotate(-90)" font-size="9.500" fill="#555" text-anchor="middle" font-family="Liberation Sans, sans-serif">4</text></svg>
<svg style="left:0;top:0" width="991" height="723"><path d="M293 705.500 H298.500 V716.400 H287.500 V710.500" fill="none" stroke="#5a5a5a" stroke-width="1"/><rect x="293" y="705" width="6" height="2.300" fill="#5a5a5a"/><circle cx="288.900" cy="706.800" r="2.900" fill="#5a5a5a"/><path d="M289.500 710.5 H291.300 M292.500 710.5 H294.300 M295.500 710.5 H297.300" stroke="#5a5a5a" stroke-width="0.900"/><path d="M289.500 712.6 H291.300 M292.500 712.6 H294.300 M295.500 712.6 H297.300" stroke="#5a5a5a" stroke-width="0.900"/><path d="M289.500 714.6 H291.300 M292.500 714.6 H294.300 M295.500 714.6 H297.300" stroke="#5a5a5a" stroke-width="0.900"/><circle cx="322.300" cy="711" r="5.300" fill="none" stroke="#444" stroke-width="1" stroke-dasharray="3.200 1.400" stroke-dashoffset="2"/><rect x="324" y="704" width="10" height="16" fill="#f3f3f3"/><path d="M323.700 704.200 V710 M321.900 708.300 L323.700 710.200 L325.500 708.300 M325 709.300 H330 M328.300 707.500 L330.200 709.300 L328.300 711.100" fill="none" stroke="#444" stroke-width="0.900"/><path d="M325 714.300 L327.600 717.200 L332.600 711.700" fill="none" stroke="#444" stroke-width="1.500"/><path d="M698.500 705.500 L692.500 704.700 V714.700 L698.500 715.500 L704.500 714.700 V704.700 Z M698.500 705.500 V716.500" fill="none" stroke="#5a5a5a" stroke-width="1"/><path d="M694 707.5 H697.500 M699.500 707.5 H703" stroke="#5a5a5a" stroke-width="0.900"/><path d="M694 709.5 H697.500 M699.500 709.5 H703" stroke="#5a5a5a" stroke-width="0.900"/><path d="M694 711.5 H697.500 M699.500 711.5 H703" stroke="#5a5a5a" stroke-width="0.900"/><path d="M694 713.5 H697.500 M699.500 713.5 H703" stroke="#5a5a5a" stroke-width="0.900"/><rect x="732.500" y="704.500" width="13" height="12" fill="none" stroke="#5a5a5a" stroke-width="1"/><path d="M734.500 706.5 H743.700" stroke="#5a5a5a" stroke-width="1"/><path d="M734.500 708.5 H743.700" stroke="#5a5a5a" stroke-width="1"/><path d="M734.500 710.5 H743.700" stroke="#5a5a5a" stroke-width="1"/><path d="M734.500 712.5 H743.700" stroke="#5a5a5a" stroke-width="1"/><path d="M734.500 714.5 H743.700" stroke="#5a5a5a" stroke-width="1"/><path d="M781 712 V704.600 H772.300 V713.700 H778" fill="none" stroke="#5a5a5a" stroke-width="1"/><path d="M774 706.800 H779.500 M774 708.800 H779 M774 710.800 H777.500" stroke="#5a5a5a" stroke-width="0.900"/><circle cx="782" cy="712.700" r="3.700" fill="#f3f3f3" stroke="#5a5a5a" stroke-width="1.100"/><path d="M780 710.500 Q782 712 781 714.500 M783 709.700 Q782.300 712 785 713" fill="none" stroke="#5a5a5a" stroke-width="0.900"/><rect x="805" y="710.500" width="7.500" height="1" fill="#444"/><rect x="818" y="710.500" width="99.600" height="1" fill="#666"/><rect x="867.800" y="707.500" width="1" height="7" fill="#666"/><rect x="861" y="705.300" width="4.800" height="11.700" fill="#555"/><rect x="923.200" y="710.500" width="7.800" height="1" fill="#444"/><rect x="926.600" y="707" width="1" height="8" fill="#444"/></svg>
<div class="a" style="left:853px;top:156px;width:109px;height:72px;background:#fdfdfd;border:1px solid #c6c6c6;box-sizing:border-box;box-shadow:1px 1px 3px rgba(0,0,0,.2)"></div>
<div class="a" style="left:910px;top:157px;width:48px;height:68px;background:#c6c6c6"></div>
<span class="t" style="left:874.500px;top:151.500px;font-family:'Liberation Serif',serif;font-weight:bold;font-style:italic;font-size:41px;line-height:44px;transform:scale(1.17,1.16) skewX(9deg);transform-origin:0 100%;color:#4a80c1">π</span>
<span class="t" style="left:919px;top:158px;font-family:'Liberation Serif',serif;font-weight:bold;font-size:35px;line-height:40px;color:#4a80c1">Ω</span>
<div class="a" style="left:860px;top:195px;width:45.7px;height:18px;overflow:hidden"><span class="t" style="left:2.4px;top:1px;font-size:11.5px;letter-spacing:0.400px;color:#262626;">Equation</span></div>
<span class="t" style="left:914.5px;top:196px;font-size:11.5px;letter-spacing:0.150px;color:#262626;">Symbol</span>
<svg style="left:883.3px;top:218px" width="5" height="3.5"><path d="M0 0 L2.5 2.5 L5 0" fill="none" stroke="#444" stroke-width="1"/></svg>
<svg style="left:931.3px;top:218px" width="5" height="3.5"><path d="M0 0 L2.5 2.5 L5 0" fill="none" stroke="#444" stroke-width="1"/></svg>
<div class="a" style="left:833px;top:227px;width:154px;height:150px;background:#fff;border:1px solid #c6c6c6;box-sizing:border-box;box-shadow:2px 2px 4px rgba(0,0,0,.25)"></div>
<div class="a" style="left:835px;top:229px;width:30px;height:30px;background:#f3f3f3;border:2px solid #dddcda;box-sizing:border-box"></div>
<svg style="left:0;top:0" width="991" height="400"><rect x="845" y="237.200" width="10" height="9.600" fill="#fff" stroke="#444" stroke-width="2"/><path d="M846.800 241.800 L849.300 244.300 L853.600 238.600" fill="none" stroke="#444" stroke-width="1.400"/><rect x="873.100" y="237.200" width="11.500" height="9.600" fill="#fff" stroke="#444" stroke-width="2"/><path d="M875 238.800 L882.700 245.200 M882.700 238.800 L875 245.200" fill="none" stroke="#444" stroke-width="1.300"/><path d="M906 242.300 L908.700 245.300 L916.300 236.500" fill="none" stroke="#444" stroke-width="1.400"/><rect x="935.1" y="237.2" width="10.300" height="10.100" fill="#fff" stroke="#444" stroke-width="1"/><rect x="937.1" y="237.2" width="6.300" height="4.500" fill="none" stroke="#444" stroke-width="1"/><rect x="937.6" y="243.7" width="5.300" height="3.600" fill="none" stroke="#444" stroke-width="1"/><rect x="938.6" y="244.7" width="1.800" height="2.600" fill="#444"/><rect x="964.7" y="237.2" width="10.300" height="10.100" fill="#444" stroke="#444" stroke-width="1"/><rect x="966.7" y="238.2" width="6.300" height="3" fill="#fff"/><rect x="967.2" y="243.7" width="5" height="3.600" fill="#fff"/><rect x="968.2" y="244.7" width="1.500" height="2.600" fill="#444"/><rect x="964.7" y="268.3" width="10.300" height="10.100" fill="#fff" stroke="#444" stroke-width="1"/><rect x="966.7" y="268.3" width="6.300" height="4.500" fill="none" stroke="#444" stroke-width="1"/><rect x="967.2" y="274.8" width="5.300" height="3.600" fill="none" stroke="#444" stroke-width="1"/><rect x="968.2" y="275.8" width="1.800" height="2.600" fill="#444"/><path d="M842.700 271.600 H856 M847.500 266.500 L842.700 271.600 L847.500 276.700" fill="none" stroke="#444" stroke-width="1.300"/><path d="M879.600 265 V278" fill="none" stroke="#444" stroke-width="1.300"/><path d="M906 270.500 L910.100 266 L914.200 270.500" fill="none" stroke="#444" stroke-width="1.300"/><path d="M934 271.600 H947.200 M942.400 266.500 L947.200 271.600 L942.400 276.700" fill="none" stroke="#444" stroke-width="1.300"/><rect x="844.500" y="296.800" width="11" height="9.200" fill="#fff" stroke="#444" stroke-width="1"/><rect x="844" y="305.500" width="12" height="2" fill="#444"/><rect x="835" y="349" width="150" height="1" fill="#e1e1e1"/></svg>
<span class="t" style="left:865.0px;width:30px;text-align:center;top:295.84px;font-size:12px;color:#444;">×</span>
<span class="t" style="left:895.2px;width:30px;text-align:center;top:295.50px;font-size:13px;color:#444;">€</span>
<span class="t" style="left:925.0px;width:30px;text-align:center;top:295.50px;font-size:13px;color:#444;">£</span>
<span class="t" style="left:955.0px;width:30px;text-align:center;top:295.50px;font-size:13px;color:#444;">¥</span>
<span class="t" style="left:834.6px;width:30px;text-align:center;top:325.06px;font-size:16px;color:#444;">©</span>
<span class="t" style="left:865.0px;width:30px;text-align:center;top:322.55px;font-size:8.5px;color:#444;">®</span>
<span class="t" style="left:894.3px;width:30px;text-align:center;top:325.50px;font-size:13px;color:#444;">™</span>
<span class="t" style="left:925.0px;width:30px;text-align:center;top:325.80px;font-size:13px;color:#444;">±</span>
<span class="t" style="left:955.0px;width:30px;text-align:center;top:325.80px;font-size:13px;color:#444;">≠</span>
<span class="t" style="left:840.200px;top:353px;font-family:'Liberation Serif',serif;font-weight:bold;font-size:17px;line-height:20px;color:#2f6db5">Ω</span>
<span class="t" style="left:867.3px;top:355px;font-size:11.5px;letter-spacing:0.058px;color:#262626;">More Symbols...</span>
<div class="a" style="left:867.300px;top:368.500px;width:9.500px;height:1px;background:#262626"></div>
<div class="a" style="left:850px;top:270px;width:91px;height:24px;background:#fff;border:1px solid #bebebe;box-sizing:border-box;box-shadow:1px 1px 2px rgba(0,0,0,.2)"></div>
<span class="t" style="left:855.6px;top:275px;font-size:11.5px;letter-spacing:0.079px;color:#575757;">Wingdings: 254</span>
<div class="red" style="left:117px;top:30px;width:63px;height:38px"></div>
<div class="red" style="left:849.500px;top:62px;width:68px;height:73.500px"></div>
<div class="red" style="left:906px;top:151.300px;width:55.500px;height:77px"></div>
<svg style="left:0;top:0" width="991" height="300"><defs><clipPath id="c1"><path d="M-10 -40 H40 V-8 H15.74 V6 H3.89 V-8 H-10 Z"/></clipPath><clipPath id="c2"><path d="M-10 -40 H40 V-8 H12.84 V6 H6.79 V-8 H-10 Z"/></clipPath></defs><g transform="translate(136.9 96.1) skewX(0) scale(0.9 1)"><g clip-path="url(#c1)"><text x="0" y="0" font-family="Liberation Sans, sans-serif" font-weight="bold" font-size="32.5" stroke-linejoin="round" fill="#ec3340" stroke="#ec3340" stroke-width="7">1</text></g><rect x="7.59" y="-12" width="4.46" height="12" fill="#ec3340" stroke="#ec3340" stroke-width="7" stroke-linejoin="round"/><g clip-path="url(#c2)"><text x="0" y="0" font-family="Liberation Sans, sans-serif" font-weight="bold" font-size="32.5" stroke-linejoin="round" fill="#fff" stroke="#fff" stroke-width="1.6">1</text></g><rect x="7.59" y="-12" width="4.46" height="12" fill="#fff" stroke="#fff" stroke-width="1.6" stroke-linejoin="round"/></g></svg>
<svg style="left:0;top:0" width="991" height="300"><g transform="translate(924.3 104.6) skewX(-1) scale(0.9 1)"><text x="0" y="0" font-family="Liberation Sans, sans-serif" font-weight="bold" font-size="30.8" stroke-linejoin="round" fill="#ec3340" stroke="#ec3340" stroke-width="7">2</text><text x="0" y="0" font-family="Liberation Sans, sans-serif" font-weight="bold" font-size="30.8" stroke-linejoin="round" fill="#fff" stroke="#fff" stroke-width="1.6">2</text></g></svg>
<svg style="left:0;top:0" width="991" height="300"><g transform="translate(967.6 197.9) skewX(0) scale(0.92 1)"><text x="0" y="0" font-family="Liberation Sans, sans-serif" font-weight="bold" font-size="30.5" stroke-linejoin="round" fill="#ec3340" stroke="#ec3340" stroke-width="7">3</text><text x="0" y="0" font-family="Liberation Sans, sans-serif" font-weight="bold" font-size="30.5" stroke-linejoin="round" fill="#fff" stroke="#fff" stroke-width="1.6">3</text></g></svg>
<svg style="left:0;top:0" width="991" height="300"><g transform="translate(763.2 245.8) skewX(0) scale(0.95 1)"><text x="0" y="0" font-family="Liberation Sans, sans-serif" font-weight="bold" font-size="32.5" stroke-linejoin="round" fill="#ec3340" stroke="#ec3340" stroke-width="7">4</text><text x="0" y="0" font-family="Liberation Sans, sans-serif" font-weight="bold" font-size="32.5" stroke-linejoin="round" fill="#fff" stroke="#fff" stroke-width="1.6">4</text></g></svg>
<svg style="left:0;top:0" width="991" height="300"><path d="M738.500 257.300 L808 256.300 L804.300 251 L827.300 258.700 L804.600 267.500 L808 261 L738.500 262 Z" fill="#e8395d"/></svg>
<div class="a" style="left:0;top:64px;width:1.3px;height:659px;background:#2b579a"></div>
<div class="a" style="left:0;top:721.6px;width:991px;height:1.4px;background:#2b579a"></div>
<div class="a" style="left:989.5px;top:64px;width:1.5px;height:659px;background:#2b579a"></div>
</body></html>
